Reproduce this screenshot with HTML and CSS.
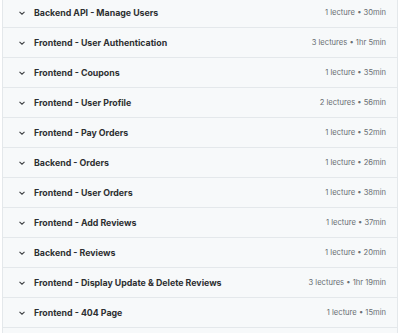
FILE: index.html
```html
<!DOCTYPE html>
<html lang="en">
<head>
    <meta charset="UTF-8">
    <meta name="viewport" content="width=device-width, initial-scale=1.0">
    <title>Course content</title>
    <link rel="stylesheet" href="styles.css">
</head>
<body>

    <div class="curriculum">
        <div class="section">
            <span class="chevron"><svg width="8" height="8" viewBox="0 0 8 8"><path d="M1.5 2.8 L4 5.2 L6.5 2.8" /></svg></span>
            <span class="title">Backend API - Manage Users</span>
            <span class="meta">1 lecture • 30min</span>
        </div>
        <div class="section">
            <span class="chevron"><svg width="8" height="8" viewBox="0 0 8 8"><path d="M1.5 2.8 L4 5.2 L6.5 2.8" /></svg></span>
            <span class="title">Frontend - User Authentication</span>
            <span class="meta">3 lectures • 1hr 5min</span>
        </div>
        <div class="section">
            <span class="chevron"><svg width="8" height="8" viewBox="0 0 8 8"><path d="M1.5 2.8 L4 5.2 L6.5 2.8" /></svg></span>
            <span class="title">Frontend - Coupons</span>
            <span class="meta">1 lecture • 35min</span>
        </div>
        <div class="section">
            <span class="chevron"><svg width="8" height="8" viewBox="0 0 8 8"><path d="M1.5 2.8 L4 5.2 L6.5 2.8" /></svg></span>
            <span class="title">Frontend - User Profile</span>
            <span class="meta">2 lectures • 56min</span>
        </div>
        <div class="section">
            <span class="chevron"><svg width="8" height="8" viewBox="0 0 8 8"><path d="M1.5 2.8 L4 5.2 L6.5 2.8" /></svg></span>
            <span class="title">Frontend - Pay Orders</span>
            <span class="meta">1 lecture • 52min</span>
        </div>
        <div class="section">
            <span class="chevron"><svg width="8" height="8" viewBox="0 0 8 8"><path d="M1.5 2.8 L4 5.2 L6.5 2.8" /></svg></span>
            <span class="title">Backend - Orders</span>
            <span class="meta">1 lecture • 26min</span>
        </div>
        <div class="section">
            <span class="chevron"><svg width="8" height="8" viewBox="0 0 8 8"><path d="M1.5 2.8 L4 5.2 L6.5 2.8" /></svg></span>
            <span class="title">Frontend - User Orders</span>
            <span class="meta">1 lecture • 38min</span>
        </div>
        <div class="section">
            <span class="chevron"><svg width="8" height="8" viewBox="0 0 8 8"><path d="M1.5 2.8 L4 5.2 L6.5 2.8" /></svg></span>
            <span class="title">Frontend - Add Reviews</span>
            <span class="meta">1 lecture • 37min</span>
        </div>
        <div class="section">
            <span class="chevron"><svg width="8" height="8" viewBox="0 0 8 8"><path d="M1.5 2.8 L4 5.2 L6.5 2.8" /></svg></span>
            <span class="title">Backend - Reviews</span>
            <span class="meta">1 lecture • 20min</span>
        </div>
        <div class="section">
            <span class="chevron"><svg width="8" height="8" viewBox="0 0 8 8"><path d="M1.5 2.8 L4 5.2 L6.5 2.8" /></svg></span>
            <span class="title">Frontend - Display Update &amp; Delete Reviews</span>
            <span class="meta">3 lectures • 1hr 19min</span>
        </div>
        <div class="section">
            <span class="chevron"><svg width="8" height="8" viewBox="0 0 8 8"><path d="M1.5 2.8 L4 5.2 L6.5 2.8" /></svg></span>
            <span class="title">Frontend - 404 Page</span>
            <span class="meta">1 lecture • 15min</span>
        </div>
        <div class="section"></div>
    </div>

</body>
</html>
```

FILE: styles.css
```css
body {
    font-family: Inter, "Liberation Sans", sans-serif;
    background-color: #ffffff;
    margin: 0;
    padding: 0;
    overflow: hidden;
}
.curriculum {
    margin: -3px 2px 0 2px;
    border-left: 1px solid #e4e8eb;
    border-right: 1px solid #e4e8eb;
}
.section {
    display: flex;
    align-items: center;
    height: 29px;
    padding: 0 11px 0 15px;
    background-color: #f7f9fa;
    border-top: 1px solid #e4e8eb;
}
.chevron {
    display: flex;
    width: 8px;
    height: 8px;
    margin-right: 8px;
}
.chevron svg path {
    fill: none;
    stroke: #3e4143;
    stroke-width: 1.1;
}
.title {
    flex: 1;
    font-size: 8.8px;
    font-weight: 700;
    color: #2d2f31;
}
.meta {
    font-size: 7.6px;
    color: #6a6f73;
}
```
